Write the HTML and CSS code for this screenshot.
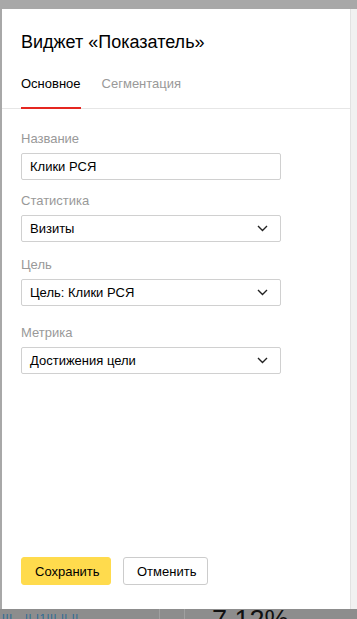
FILE: index.html
```html
<!DOCTYPE html>
<html lang="ru">
<head>
  <meta charset="UTF-8" />
  <title>Виджет «Показатель»</title>
  <link rel="stylesheet" href="styles.css">
</head>
<body>
  <div class="modal">
    <div class="modal-body">
      <h1 class="title">Виджет «Показатель»</h1>

      <!-- TABS -->
      <div class="tabs">
        <div class="tab active">Основное</div>
        <div class="tab">Сегментация</div>
      </div>

      <!-- FORM -->
      <div class="form">
        <div class="field">
          <div class="label">Название</div>
          <div class="input">Клики РСЯ</div>
        </div>
        <div class="field field-stat">
          <div class="label">Статистика</div>
          <div class="select">Визиты
            <svg class="chev" width="11" height="7" viewBox="0 0 11 7"><path d="M1 1l4.5 4.5L10 1" fill="none" stroke="#222" stroke-width="1.4"/></svg>
          </div>
        </div>
        <div class="field field-goal">
          <div class="label">Цель</div>
          <div class="select">Цель: Клики РСЯ
            <svg class="chev" width="11" height="7" viewBox="0 0 11 7"><path d="M1 1l4.5 4.5L10 1" fill="none" stroke="#222" stroke-width="1.4"/></svg>
          </div>
        </div>
        <div class="field field-metric">
          <div class="label">Метрика</div>
          <div class="select">Достижения цели
            <svg class="chev" width="11" height="7" viewBox="0 0 11 7"><path d="M1 1l4.5 4.5L10 1" fill="none" stroke="#222" stroke-width="1.4"/></svg>
          </div>
        </div>
      </div>

      <!-- ACTIONS -->
      <div class="actions">
        <button class="btn btn-yellow">Сохранить</button>
        <button class="btn btn-plain">Отменить</button>
      </div>
    </div>
    <div class="scroll"></div>
  </div>

  <!-- page under the overlay -->
  <div class="under">
    <div class="under-link">Ш...ll  l1lll ll ll</div>
    <div class="under-sep"></div>
    <div class="under-sep"></div>
    <div class="under-value">7.12%</div>
  </div>
</body>
</html>
```

FILE: styles.css
```css
/* BASE */
* { margin:0; padding:0; box-sizing:border-box; }
html, body { height:100%; overflow:hidden; }
body {
  font-family:'Liberation Sans', Arial, sans-serif;
  background:#a8a8a8;
  color:#000;
  padding-top:9px;
  padding-left:2px;
}

/* MODAL */
.modal {
  display:flex;
  width:355px; height:600px;
  background:#fff;
}
.modal-body {
  flex:1;
  display:flex; flex-direction:column;
}
.scroll {
  width:7px;
  background:#f1f1f1;
  border-left:1px solid #e2e2e2;
}

.title {
  font-size:18px; font-weight:normal;
  padding:22px 0 0 19px;
  line-height:22px;
  color:#000;
}

/* TABS */
.tabs {
  display:flex; gap:21px;
  padding:0 0 0 19px;
  margin-top:17px;
  border-bottom:1px solid #e6e6e6;
}
.tab {
  font-size:13px; color:#999;
  padding:6px 0 16px;
  border-bottom:2px solid transparent;
  margin-bottom:-1px;
}
.tab.active { color:#000; border-bottom-color:#e52620; }

/* FORM */
.form {
  padding:22px 0 0 19px;
  display:flex; flex-direction:column;
}
.field-stat { margin-top:13px; }
.field-goal { margin-top:15px; }
.field-metric { margin-top:19px; }
.label {
  font-size:13px; color:#999;
  line-height:15px;
  margin-bottom:7px;
}
.input, .select {
  width:260px; height:27px;
  border:1px solid #d0d0d0; border-radius:2px;
  font-size:13px; line-height:25px;
  padding:0 8px;
  display:flex; align-items:center; justify-content:space-between;
}
.select .chev { margin-right:4px; }

/* ACTIONS */
.actions {
  margin-top:auto;
  padding:0 0 24px 19px;
  display:flex; gap:12px;
}
.btn {
  font-family:inherit; font-size:13px;
  height:28px; border-radius:3px;
  padding:0 13px;
  cursor:pointer;
}
.btn-yellow { background:#ffdb4d; border:1px solid #ffdb4d; width:90px; }
.btn-plain { background:#fff; border:1px solid #ccc; width:85px; }

/* PAGE UNDER OVERLAY */
.under {
  display:flex; align-items:flex-start;
  height:20px;
  background:#8d8d8d;
  margin-left:-2px;
}
.under-link {
  width:159px;
  font-size:11px; color:#2a6a96;
  padding:3px 0 0 2px;
  letter-spacing:1px;
}
.under-sep { width:25px; height:20px; border-left:1px solid #a0a0a0; }
.under-value {
  font-size:27px; line-height:22px;
  color:#111;
  margin-left:-24px;
  padding-left:27px;
}
```
